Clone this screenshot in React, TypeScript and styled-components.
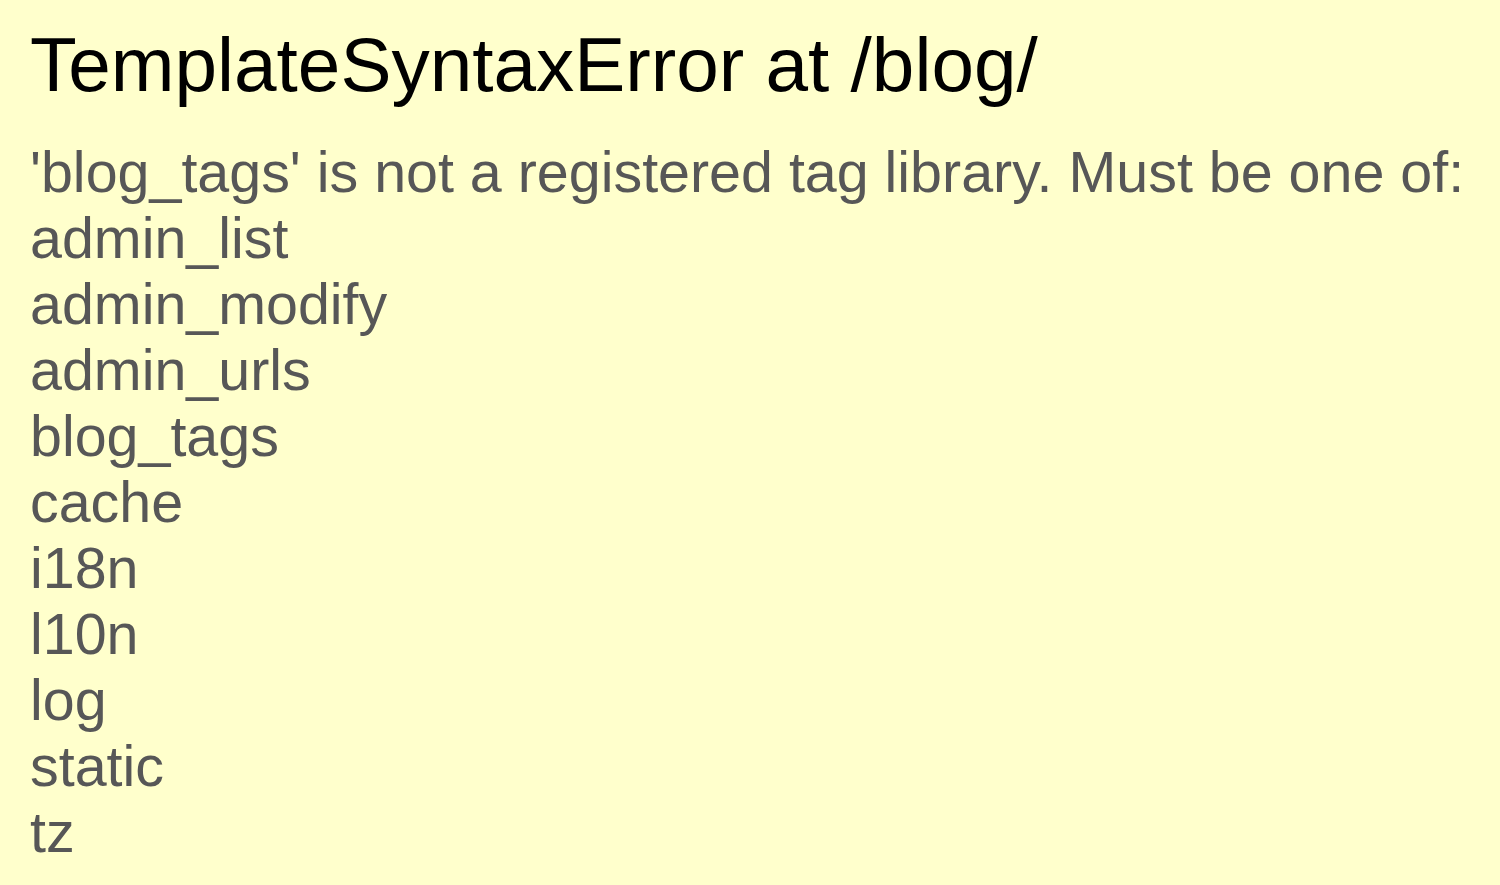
import React from "react";
import styled, { createGlobalStyle } from "styled-components";

const Global = createGlobalStyle`
  html, body { margin: 0; padding: 0; background: #ffffcc; }
  body { font-family: "Liberation Sans", Arial, Helvetica, sans-serif; }
`;

const Summary = styled.div`
  background: #ffffcc;
  min-height: 885px;
  box-sizing: border-box;
  padding: 21px 30px 0 30px;
`;

const Title = styled.h1`
  margin: 0;
  font-weight: normal;
  font-size: 76.5px;
  line-height: normal;
  color: #000;
`;

const ExceptionValue = styled.pre`
  margin: 30px 0 0 0;
  font-family: "Liberation Sans", Arial, Helvetica, sans-serif;
  font-size: 57.4px;
  line-height: 66px;
  color: #575757;
  white-space: pre;
`;

const libraries = [
  "admin_list",
  "admin_modify",
  "admin_urls",
  "blog_tags",
  "cache",
  "i18n",
  "l10n",
  "log",
  "static",
  "tz",
];

export default function App() {
  return (
    <>
      <Global />
      <Summary>
        <Title>TemplateSyntaxError at /blog/</Title>
        <ExceptionValue>
          {"'blog_tags' is not a registered tag library. Must be one of:\n" +
            libraries.join("\n")}
        </ExceptionValue>
      </Summary>
    </>
  );
}
